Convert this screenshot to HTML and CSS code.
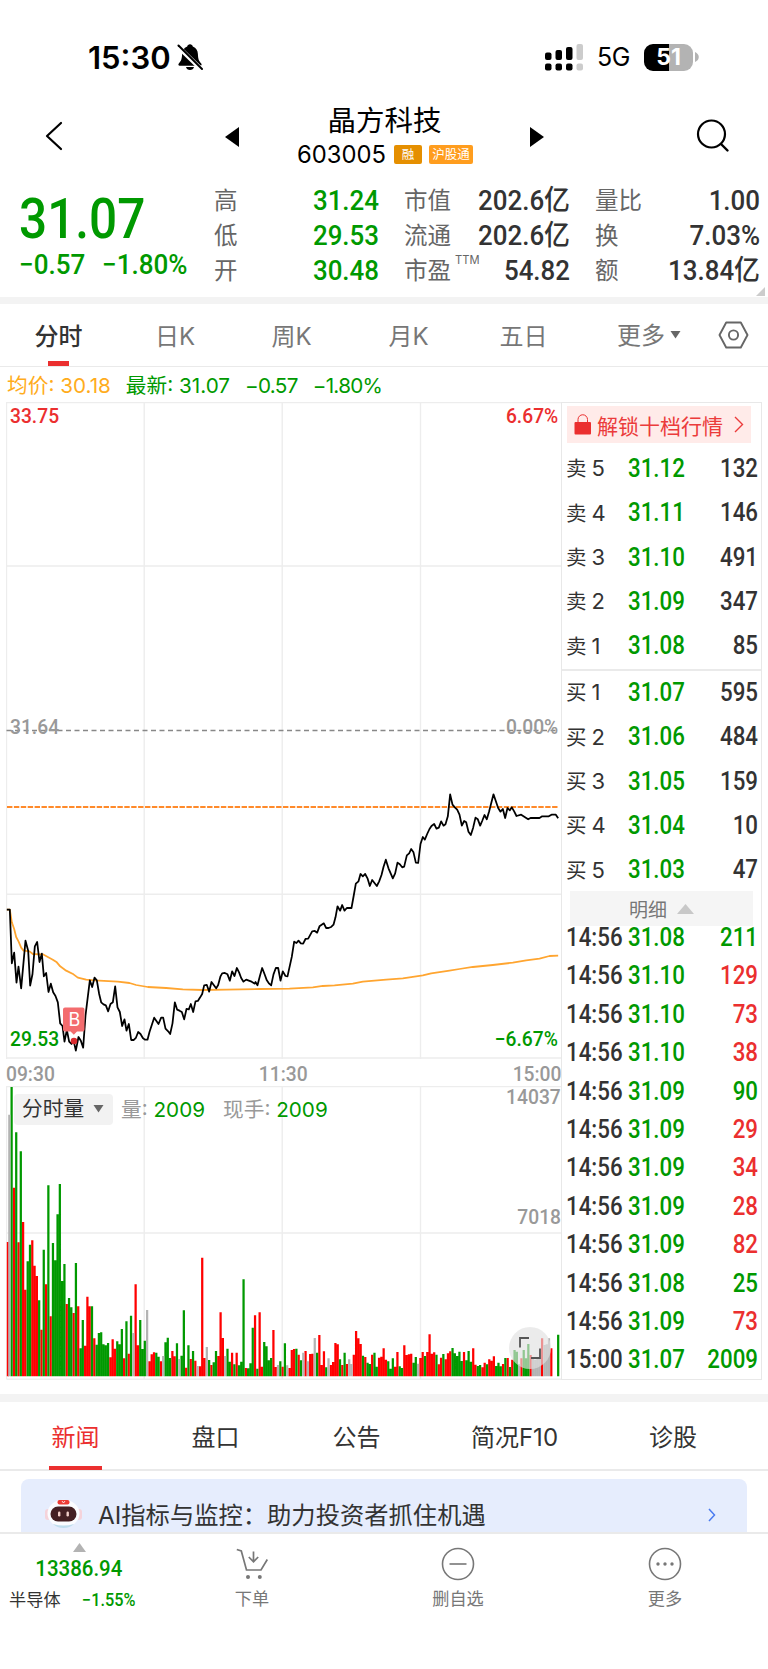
FILE: index.html
```html
<!DOCTYPE html>
<html lang="zh-CN">
<head>
<meta charset="utf-8">
<title>晶方科技 603005</title>
<link rel="stylesheet" href="styles.css">
</head>
<body>
<div class="app">
  <div class="status">
    <span class="clock">15:30</span>
    <svg class="bell" width="26" height="28" viewBox="0 0 26 28"><path d="M13 1.2c-1.500 0-2.500 1-2.800 2.200C6.800 4.600 5.300 7.500 5.100 11c-.2 5-.9 7-3.300 9.400-.8.9-.4 2.300 1 2.300h20.400c1.400 0 1.800-1.400 1-2.300-2.400-2.400-3.100-4.400-3.300-9.400-.2-3.500-1.700-6.400-5.100-7.600C15.500 2.200 14.500 1.200 13 1.200zM9 24h8c-.4 1.800-2 3-4 3s-3.600-1.200-4-3z"/><path d="M1 3.500 25 27" stroke="#fff" stroke-width="4.500"/><path d="M1.500 2.500 25 26" stroke="#000" stroke-width="2" stroke-linecap="round"/></svg>
    <svg class="signal" width="38" height="27" viewBox="0 0 38 27"><g><rect x="0" y="8.500" width="6.500" height="7.500" rx="2"/><rect x="10.500" y="6" width="6.500" height="10" rx="2"/><rect x="21" y="3" width="6.500" height="13" rx="2"/><rect x="0" y="19.500" width="6.500" height="7" rx="2"/><rect x="10.500" y="19.500" width="6.500" height="7" rx="2"/><rect x="21" y="19.500" width="6.500" height="7" rx="2"/></g><g fill="#ccc"><rect x="31.500" y="0" width="6.500" height="16" rx="2"/><rect x="31.500" y="19.500" width="6.500" height="7" rx="2"/></g></svg>
    <span class="net">5G</span>
    <span class="battery">51</span><svg width="5" height="10" viewBox="0 0 5 10"><path d="M1 0c5 2 5 8 0 10z" fill="#b3b3b3"/></svg>
  </div>

  <div class="nav">
    <svg class="back" width="18" height="30" viewBox="0 0 18 30"><path d="M16 2 2 15 16 28" fill="none" stroke="#000" stroke-width="2.200" stroke-linecap="round" stroke-linejoin="round"/></svg>
    <svg class="prev" width="14" height="20" viewBox="0 0 14 20"><path d="M14 0v20L0 10z"/></svg>
    <div class="name">
      <div class="title">晶方科技</div>
      <div class="code"><span class="codenum">603005</span><span class="badge dark">融</span><span class="badge">沪股通</span></div>
    </div>
    <svg class="next" width="14" height="20" viewBox="0 0 14 20"><path d="M0 0v20l14-10z"/></svg>
    <svg class="search" width="34" height="34" viewBox="0 0 34 34"><circle cx="15.500" cy="15" r="13.500" fill="none" stroke="#000" stroke-width="2.200"/><path d="m25 25 6.500 6.500" stroke="#000" stroke-width="2.400" stroke-linecap="round"/></svg>
  </div>

  <div class="quote">
    <div class="main">
      <div class="big num">31.07</div>
      <div class="delta num"><span>−0.57</span><span>−1.80%</span></div>
    </div>
    <dl class="stats">
      <dt>高</dt><dd class="g">31.24</dd><dt>市值</dt><dd>202.6亿</dd><dt>量比</dt><dd>1.00</dd>
      <dt>低</dt><dd class="g">29.53</dd><dt>流通</dt><dd>202.6亿</dd><dt>换</dt><dd>7.03%</dd>
      <dt>开</dt><dd class="g">30.48</dd><dt>市盈<sup>TTM</sup></dt><dd>54.82</dd><dt>额</dt><dd>13.84亿</dd>
    </dl>
    <svg class="corner" width="9" height="9" viewBox="0 0 9 9"><path d="M9 0v9H0z" fill="#ccc"/></svg>
  </div>

  <div class="ktabs">
    <span class="on">分时</span><span>日K</span><span>周K</span><span>月K</span><span>五日</span>
    <span class="more">更多<svg width="11" height="8" viewBox="0 0 11 8"><path d="M.5 0h10L5.500 7.500z" fill="#666"/></svg></span>
    <svg width="31" height="28" viewBox="0 0 31 28"><path d="M8.200 1.500h14.600L29.500 14l-6.700 12.500H8.200L1.500 14z" fill="none" stroke="#666" stroke-width="1.900" stroke-linejoin="round"/><circle cx="15.500" cy="14" r="4.600" fill="none" stroke="#666" stroke-width="1.900"/></svg>
  </div>

  <div class="info"><span class="avg">均价: <i>30.18</i></span><span>最新: <i>31.07</i></span><i>−0.57</i><i>−1.80%</i></div>

  <div class="board">
    <div class="charts">
      <div class="price">
        <svg width="555" height="657" viewBox="6.500 403 555 657">
          <g class="grid"><path d="M7 403.500H562M7 567H562M7 895.300H562M7 1059H562M7 403V1060M144.700 403V1060M282.700 403V1060M421 403V1060"/></g>
          <path d="M7 731.500H558" stroke="#888" stroke-width="1.300" stroke-dasharray="5 3.500"/>
          <path d="M7.500 808H559" stroke="#ff8a2a" stroke-width="2" stroke-dasharray="5.400 1.500"/>
          <g fill="none" stroke-linejoin="round">
            <path class="line avgline" transform="translate(0 780) scale(.33333)" d="M22 392 31 392 37 430 44 450 50 474 57 487 65 506 72 515 90 517 100 525 130 526 145 534 160 542 172 550 182 562 200 575 222 586 235 596 260 602 285 604 355 608 390 612 410 618 445 624 500 627 550 631 610 633 680 632 780 630 870 629 940 625 970 621 1005 619 1060 614 1090 608 1160 602 1210 598 1270 589 1295 583 1350 575 1380 570 1420 564 1480 558 1540 551 1580 544 1620 539 1650 531 1676 530"/>
            <path class="line" transform="translate(0 780) scale(.33333)" d="M22 392 31 392 37 553 44 521 51 611 57 563 65 628 78 485 86 515 92 620 99 585 106 502 113 489 120 549 127 524 133 592 140 582 147 639 154 614 161 640 168 651 175 670 182 733 189 741 195 788 202 753 209 788 216 795 223 788 229 815 237 774 244 785 251 806 258 710 271 604 278 624 285 596 292 604 299 645 305 670 312 676 319 679 326 697 333 675 340 670 347 622 354 685 361 699 368 741 375 721 381 755 388 735 395 783 403 783 409 777 416 759 423 765 430 777 436 782 444 782 450 759 464 716 477 735 485 716 491 716 498 749 506 757 512 765 519 733 526 670 533 692 540 695 547 699 554 721 561 690 568 691 574 675 581 699 588 667 595 666 602 655 608 645 614 619 622 618 629 638 636 609 650 628 656 618 663 592 668 583 676 582 684 586 691 605 698 577 705 591 712 567 719 581 725 597 732 608 740 602 754 607 766 614 768 609 774 619 781 592 788 567 795 585 802 604 809 614 815 619 822 586 829 567 836 567 843 605 850 577 858 591 864 592 877 533 884 488 891 492 897 485 904 493 911 494 918 480 926 479 938 457 946 456 953 461 960 442 973 433 980 447 987 447 995 444 1002 437 1008 415 1014 382 1022 395 1028 378 1035 395 1042 387 1056 387 1063 348 1069 314 1077 307 1083 285 1090 292 1097 285 1104 298 1111 321 1118 303 1132 321 1139 307 1146 288 1152 264 1159 242 1167 268 1180 298 1187 283 1194 251 1201 256 1208 265 1214 263 1222 229 1229 223 1235 210 1242 220 1249 251 1256 252 1263 195 1270 174 1276 182 1283 165 1290 150 1296 141 1304 135 1311 149 1318 146 1325 127 1332 140 1338 136 1345 112 1352 46 1359 77 1366 85 1373 92 1380 107 1387 140 1394 126 1400 130 1407 158 1414 168 1421 146 1428 116 1435 121 1442 140 1448 126 1455 108 1462 121 1469 97 1482 46 1496 87 1503 98 1510 90 1517 117 1524 87 1531 94 1537 85 1544 97 1551 111 1565 107 1586 121 1593 117 1620 117 1628 112 1648 112 1656 107 1669 107 1676 118"/>
          </g>
          <circle cx="74.500" cy="1042" r="3.300" fill="#d92b2f"/>
          <path d="M65.500 1008.500h17.500a2 2 0 0 1 2 2v20a2 2 0 0 1-2 2h-5.500l-3.200 3.300-3.200-3.300h-5.600a2 2 0 0 1-2-2v-20a2 2 0 0 1 2-2z" fill="#f36c6e"/>
        </svg>
        <span class="mark">B</span>
        <span class="lab num r tl">33.75</span><span class="lab num r tr">6.67%</span>
        <span class="lab num m ml">31.64</span><span class="lab num m mr">0.00%</span>
        <span class="lab num g bl">29.53</span><span class="lab num g br">−6.67%</span>
      </div>
      <div class="times"><span class="num">09:30</span><span class="num">11:30</span><span class="num">15:00</span></div>
      <div class="volume">
        <svg width="555" height="294" viewBox="6.500 1087 555 294">
          <g class="grid"><path d="M7 1087.500H562M7 1234H562M7 1380.300H562M7 1087V1380M144.700 1087V1380M282.700 1087V1380M421 1087V1380"/></g>
          <g id="bars"></g>
        </svg>
        <div class="vhead"><span class="pick">分时量<svg width="11" height="8" viewBox="0 0 11 8"><path d="M.5 0h10L5.500 7.500z" fill="#666"/></svg></span><span>量: <i>2009</i></span><span class="now">现手: <i>2009</i></span></div>
        <span class="lab num m v1">14037</span><span class="lab num m v2">7018</span>
        <span class="expand"><svg width="22" height="22" viewBox="0 0 22 22"><path d="M1 10.500V1h9M21 11.500V21h-9" fill="none" stroke="#555" stroke-width="1.800"/></svg></span>
      </div>
    </div>

    <div class="side">
      <div class="unlock"><svg width="18" height="21" viewBox="0 0 18 21"><rect x=".5" y="8" width="16.500" height="12.500" rx="1" fill="#eb2f2f"/><path d="M4 8V5.500a4.700 4.700 0 0 1 9.500 0V8" fill="none" stroke="#eb2f2f" stroke-width="1"/></svg><span>解锁十档行情</span><svg class="arr" width="10" height="17" viewBox="0 0 10 17"><path d="m1 1 7.500 7.500L1 16" fill="none" stroke="#eb3b3b" stroke-width="1.400"/></svg></div>
      <div class="orders">
        <div><span>卖<i>5</i></span><b class="num">31.12</b><b class="num q">132</b></div>
        <div><span>卖<i>4</i></span><b class="num">31.11</b><b class="num q">146</b></div>
        <div><span>卖<i>3</i></span><b class="num">31.10</b><b class="num q">491</b></div>
        <div><span>卖<i>2</i></span><b class="num">31.09</b><b class="num q">347</b></div>
        <div><span>卖<i>1</i></span><b class="num">31.08</b><b class="num q">85</b></div>
      </div>
      <div class="orders buy">
        <div><span>买<i>1</i></span><b class="num">31.07</b><b class="num q">595</b></div>
        <div><span>买<i>2</i></span><b class="num">31.06</b><b class="num q">484</b></div>
        <div><span>买<i>3</i></span><b class="num">31.05</b><b class="num q">159</b></div>
        <div><span>买<i>4</i></span><b class="num">31.04</b><b class="num q">10</b></div>
        <div><span>买<i>5</i></span><b class="num">31.03</b><b class="num q">47</b></div>
      </div>
      <div class="detail">明细<svg width="17" height="10" viewBox="0 0 17 10"><path d="M8.500 0 17 10H0z" fill="#c8c8c8"/></svg></div>
      <div class="ticks">
        <div><b class="num t">14:56</b><b class="num">31.08</b><b class="num q g">211</b></div>
        <div><b class="num t">14:56</b><b class="num">31.10</b><b class="num q r">129</b></div>
        <div><b class="num t">14:56</b><b class="num">31.10</b><b class="num q r">73</b></div>
        <div><b class="num t">14:56</b><b class="num">31.10</b><b class="num q r">38</b></div>
        <div><b class="num t">14:56</b><b class="num">31.09</b><b class="num q g">90</b></div>
        <div><b class="num t">14:56</b><b class="num">31.09</b><b class="num q r">29</b></div>
        <div><b class="num t">14:56</b><b class="num">31.09</b><b class="num q r">34</b></div>
        <div><b class="num t">14:56</b><b class="num">31.09</b><b class="num q r">28</b></div>
        <div><b class="num t">14:56</b><b class="num">31.09</b><b class="num q r">82</b></div>
        <div><b class="num t">14:56</b><b class="num">31.08</b><b class="num q g">25</b></div>
        <div><b class="num t">14:56</b><b class="num">31.09</b><b class="num q r">73</b></div>
        <div><b class="num t">15:00</b><b class="num">31.07</b><b class="num q g">2009</b></div>
      </div>
    </div>
  </div>

  <div class="ntabs"><span class="on">新闻</span><span>盘口</span><span>公告</span><span>简况F10</span><span>诊股</span></div>
  <div class="feed">
    <div class="card">
      <svg width="38" height="30" viewBox="0 0 38 30"><rect x="0" y="10" width="6" height="11" rx="3" fill="#f5d3da"/><rect x="31" y="10" width="6" height="11" rx="3" fill="#f5d3da"/><ellipse cx="18.500" cy="14.500" rx="16" ry="13.700" fill="#fbfcff"/><path d="M8 25q10.500 3 21 0-4 4-10.500 4T8 25z" fill="#c0deee"/><rect x="5.500" y="7.500" width="26" height="15" rx="7.500" fill="#452023"/><rect x="13" y="12.500" width="2.400" height="5" rx="1.200" fill="#f3cfc9"/><rect x="21.500" y="12.500" width="2.400" height="5" rx="1.200" fill="#f3cfc9"/><rect x="12.500" y="1" width="12" height="4.500" rx="2" fill="#ee3b35"/><path d="m17 2 1.500 2L20 2" fill="none" stroke="#fff" stroke-width=".8"/></svg>
      <span>AI指标与监控：助力投资者抓住机遇</span>
      <svg class="arr" width="8" height="14" viewBox="0 0 8 14"><path d="m1 1 5.500 6L1 13" fill="none" stroke="#4a7bf0" stroke-width="1.500"/></svg>
    </div>
  </div>

  <div class="footer">
    <div class="index">
      <svg width="13" height="9" viewBox="0 0 13 9"><path d="M6.500 0 13 9H0z" fill="#b3b3b3"/></svg>
      <b class="num">13386.94</b>
      <div class="sector"><span>半导体</span><b class="num">−1.55%</b></div>
    </div>
    <div class="act"><svg width="34" height="34" viewBox="0 0 34 34"><g fill="none" stroke="#777" stroke-width="1.700"><path d="M1.800 2.500 6.300 4 11.500 23H26l6.300-10.500M18.500 4.500v10.300M13.800 10l4.700 4.800 4.700-4.800"/></g><circle cx="13" cy="30" r="2" fill="#777"/><circle cx="24.800" cy="30" r="2" fill="#777"/></svg>下单</div>
    <div class="act"><svg width="34" height="34" viewBox="0 0 34 34"><g fill="none" stroke="#777" stroke-width="1.600"><circle cx="17" cy="17" r="15.500"/><path d="M8.500 17h17"/></g></svg>删自选</div>
    <div class="act"><svg width="34" height="34" viewBox="0 0 34 34"><circle cx="17" cy="17" r="15.500" fill="none" stroke="#777" stroke-width="1.600"/><g fill="#777"><circle cx="10" cy="17" r="1.700"/><circle cx="17" cy="17" r="1.700"/><circle cx="24" cy="17" r="1.700"/></g></svg>更多</div>
  </div>
</div>
<script src="chart.js"></script>
</body>
</html>
```
FILE: styles.css
```css
* { box-sizing: border-box; }
body { margin: 0; background: #fff; color: #333; font-family: Inter, "Noto Sans CJK SC", sans-serif; }
svg { display: block; flex: none; }
i, b { font-style: normal; font-weight: inherit; }
.app { width: 768px; height: 1669px; overflow: hidden; display: flex; flex-direction: column; }
/* Figures are set slightly condensed, anchored on their aligned edge. */
.num { font-family: Roboto, "Noto Sans CJK SC", sans-serif; font-weight: 500; white-space: nowrap; transform: scaleX(.93); transform-origin: left; }
.g { color: #090; }
.r { color: #eb2f2f; }

.status { height: 96px; padding: 19px 0 0 88px; display: flex; align-items: center; color: #000; }
.clock { font-size: 31px; font-weight: 570; width: 89px; }
.signal { margin-left: 342px; }
.net { font-size: 25px; margin-left: 14px; width: 47px; letter-spacing: -.5px; }
.battery { width: 49px; height: 27px; border-radius: 9px; background: linear-gradient(90deg, #000 51%, #b3b3b3 51%); color: #fff; font-size: 23px; font-weight: 700; line-height: 27px; text-align: center; margin-right: 1px; }

.nav { height: 83px; display: flex; align-items: flex-start; }
.back { margin: 25px 0 0 45px; }
.prev { margin: 31px 0 0 162px; }
.name { width: 291px; text-align: center; color: #000; padding-top: 4px; }
.title { font-size: 28.500px; line-height: 42px; }
.code { display: flex; justify-content: center; align-items: center; height: 28px; margin-top: -1px; }
.codenum { font-size: 23.800px; margin: 0 8px 0 1px; }
.badge { background: #ff9d1e; color: #fff; font-size: 12.500px; line-height: 19px; height: 19px; border-radius: 2px; width: 44px; margin-left: 7px; }
.badge.dark { width: 28px; margin-left: 0; background: #e58f00; }
.next { margin: 31px 0 0 0; }
.search { margin: 23px 0 0 152px; }

.quote { height: 126px; border-bottom: 7px solid #f3f3f3; display: flex; position: relative; }
.main { width: 214px; padding: 5px 0 0 19px; color: #090; }
.big { font-size: 55px; line-height: 70px; height: 65px; transform: scaleX(.9); }
.delta { font-size: 28px; line-height: 32px; display: flex; gap: 18px; transform: scaleX(.93); }
.stats { margin: 4px 0 0; display: grid; grid-template-columns: 50px 115px 68px 123px 70px 120px; grid-auto-rows: 35px; line-height: 35px; }
.stats dt { font-size: 23.500px; color: #666; white-space: nowrap; }
.stats dt:nth-of-type(3n+2), .stats dt:nth-of-type(3n) { padding-left: 25px; }
.stats dd { margin: 0; font: 500 28px/35px Roboto, "Noto Sans CJK SC", sans-serif; text-align: right; white-space: nowrap; transform: scaleX(.925); transform-origin: right; }
.stats sup { font-size: 11.200px; line-height: 0; position: relative; top: -6px; left: 4px; vertical-align: super; }
.corner { position: absolute; right: 3px; top: 108px; }

.ktabs { height: 63px; display: grid; grid-template-columns: 117px 116px 117px 117px 113px 138px 30px; align-items: center; text-align: center; font-size: 24px; color: #777; border-bottom: 1px solid #eaeaea; }
.ktabs span { height: 62px; line-height: 65px; position: relative; }
.ktabs .on { color: #333; font-weight: 500; }
.ktabs .on::after { content: ""; position: absolute; left: 48px; bottom: 0; width: 21px; height: 5px; background: #eb2f2f; }
.ktabs .more { display: flex; align-items: center; justify-content: center; gap: 5px; }
.info { height: 35px; padding-left: 7px; display: flex; align-items: baseline; line-height: 37px; font-size: 20.700px; color: #090; white-space: pre; }
.info > * { margin-right: 15px; }
.info > i { letter-spacing: -.7px; }
.avg { color: #ffac1c; }

.board { display: flex; height: 978px; padding-left: 6px; }
.charts { width: 555px; }
.grid path { stroke: #ededed; stroke-width: 1.400; fill: none; }
.line { stroke: #000; stroke-width: 5.300; }
.avgline { stroke: #ffa530; }
.price { position: relative; height: 657px; }
.lab { position: absolute; font-size: 20.700px; line-height: 24px; }
.m, .times { color: #999; }
.tl, .ml, .bl { left: 4px; }
.tr, .mr, .br { right: 3px; transform-origin: right; }
.tl, .tr { top: 2px; }
.ml, .mr { top: 313px; }
.bl, .br { top: 625px; }
.mark { position: absolute; left: 58px; top: 607px; width: 21px; text-align: center; color: #fff; font-size: 18px; line-height: 22px; }
.times { height: 27px; display: flex; justify-content: space-between; font-size: 20.700px; line-height: 30px; }
.times :nth-child(2) { transform-origin: center; }
.times :nth-child(3) { transform-origin: right; }
.volume { position: relative; height: 294px; }
.vhead { position: absolute; left: 8px; top: 8px; display: flex; align-items: center; font-size: 20.700px; line-height: 30px; color: #999; white-space: pre; }
.vhead i { color: #090; }
.pick { background: #f2f2f2; width: 99px; height: 31px; border-radius: 4px; padding: 0 0 1px 8px; margin-right: 8px; display: flex; align-items: center; gap: 9px; color: #333; }
.now { margin-left: 18px; }
.v1, .v2 { right: 0; transform-origin: right; }
.v1 { top: -1px; }
.v2 { top: 119px; }
.expand { position: absolute; left: 503px; top: 241px; width: 42px; height: 42px; border-radius: 50%; background: rgba(225, 225, 225, .65); display: grid; place-items: center; }

.side { width: 201px; border: 1px solid #e8e8e8; padding-top: 3px; }
.unlock { width: 184px; height: 37px; margin-left: 5px; background: #ffebe9; color: #eb3b3b; font-size: 21px; display: flex; align-items: center; padding-left: 7px; gap: 5px; white-space: nowrap; }
.unlock .arr { margin-left: 6px; }
.orders { height: 226px; padding: 2px 0 0 4px; font-size: 20.500px; }
.orders > div { display: grid; grid-template-columns: 62px 60px 70px; height: 44.300px; align-items: center; }
.orders span i { margin-left: 5px; font-size: 22px; }
.orders .num, .ticks .num { font-size: 25.200px; line-height: 30px; color: #090; transform: scaleX(.885); padding-top: 1px; }
.orders .num { padding-top: 3px; }
.orders .q, .ticks .q { text-align: right; transform-origin: right; }
.orders .q, .ticks .t { color: #333; }
.ticks .r { color: #eb2f2f; }
.buy { border-top: 2px solid #eaeaea; height: 222px; padding-top: 0; }
.buy > div:first-child { margin-top: -2px; }
.detail { width: 183px; height: 35px; margin-left: 8px; background: #f5f5f5; color: #777; font-size: 19px; display: flex; align-items: center; justify-content: center; gap: 10px; }
.ticks { padding-left: 4px; margin-top: -8px; }
.ticks > div { display: grid; grid-template-columns: 62px 60px 70px; height: 38.400px; align-items: center; }

.ntabs { margin-top: 14px; height: 77px; border-top: 8px solid #f3f3f3; border-bottom: 2px solid #eaeaea; display: grid; grid-template-columns: 151px 129px 153px 163px 154px; text-align: center; font-size: 24px; line-height: 71px; }
.ntabs span { position: relative; }
.ntabs .on { color: #eb2f2f; }
.ntabs .on::after { content: ""; position: absolute; left: 49px; top: 64px; width: 53px; height: 4px; background: #eb2f2f; }
.feed { height: 61px; padding: 8px 21px 0; }
.card { height: 53px; background: #e6edfd; border-radius: 8px 8px 0 0; padding: 18px 0 0 24px; display: flex; font-size: 24.300px; line-height: 36px; }
.card svg { margin-top: 2px; }
.card span { margin-left: 15px; width: 580px; }
.card .arr { margin: 11px 0 0 30px; }
.footer { border-top: 2px solid #eaeaea; height: 137px; display: grid; grid-template-columns: 158px 188px 224px 190px; font-size: 17.200px; color: #777; }
.act { display: flex; flex-direction: column; align-items: center; padding-top: 13px; line-height: 26px; gap: 5px; }
.index { display: flex; flex-direction: column; align-items: center; padding-top: 9px; }
.index > .num { font-size: 22px; line-height: 26px; margin-top: 4px; color: #090; transform-origin: center; }
.sector { color: #333; width: 158px; padding-left: 9px; display: flex; gap: 21px; line-height: 26px; margin-top: 5px; align-items: center; white-space: nowrap; }
.sector .num { color: #090; font-size: 17.500px; }
```
FILE: chart.js
```js
// One entry per minute: colour letter (r rise, g fall, e even) and top of the bar in thirds of a pixel.
const data = "r519 e137 g54 r356 g190 r520 g247 r459 r662 g577 g527 r514 r590 r621 g694 r782 g542 r646 g349 r742 g522 g574 g436 g345 g636 g585 r705 g687 g715 r732 g582 r712 g838 g753 r830 r683 r712 g712 r808 g827 g792 g790 g826 g829 g822 r865 r811 r839 g817 g826 g780 r868 g757 r854 g740 e792 r646 r829 g753 g840 g815 e723 r877 r856 r850 g851 g863 r877 e861 g820 g806 g867 r846 r862 g823 e870 g860 g724 r896 g829 r870 g846 r875 e891 r892 r566 r867 e834 g873 r888 g880 g846 r861 r730 r807 e861 g839 g878 r851 g886 r851 g889 g878 g631 r897 g898 g883 g776 r739 g899 r730 r893 g819 g832 g874 g867 r783 r894 e888 g877 r893 g823 e889 r897 r843 r840 g839 r857 g874 e851 r846 e877 r855 r854 e807 g851 r798 r888 r847 g895 e868 r888 r879 r822 r826 g871 r888 g851 r885 e871 e885 r857 r786 r808 r825 g860 r864 g881 g885 r857 g851 g893 r866 r863 r838 r872 g877 g899 g868 r893 r849 g892 g897 r829 r858 r856 r854 g881 g864 e884 r867 r849 g861 r849 r796 r854 r850 g857 r886 r866 g855 r871 r853 r847 g837 g853 g861 g848 g876 r849 g874 g846 g878 r838 r887 g891 g888 r895 r881 g886 r871 r875 r862 g891 g881 g892 r885 g867 r867 g894 r872 g843 g848 e885 r868 g843 g868 g825 r858 e870 e872 e866 e868 r808 e828 e826 e808 r838 - - g797".split(" ");
const colors = { r: "#f00", g: "#090", e: "#b3b3b3" };
const paths = { r: "", g: "", e: "" };
data.forEach((d, i) => {
  if (d === "-") return;
  const top = 1070 + Number(d.slice(1)) / 3;
  const x = Math.max(7.3, 6.4 + i * 2.2965);
  paths[d[0]] += `M${x.toFixed(2)} 1377.200V${top.toFixed(1)}h2.250V1377.200z`;
});
const g = document.getElementById("bars");
for (const k in paths) {
  const p = document.createElementNS("http://www.w3.org/2000/svg", "path");
  p.setAttribute("d", paths[k]);
  p.setAttribute("fill", colors[k]);
  g.appendChild(p);
}
```
